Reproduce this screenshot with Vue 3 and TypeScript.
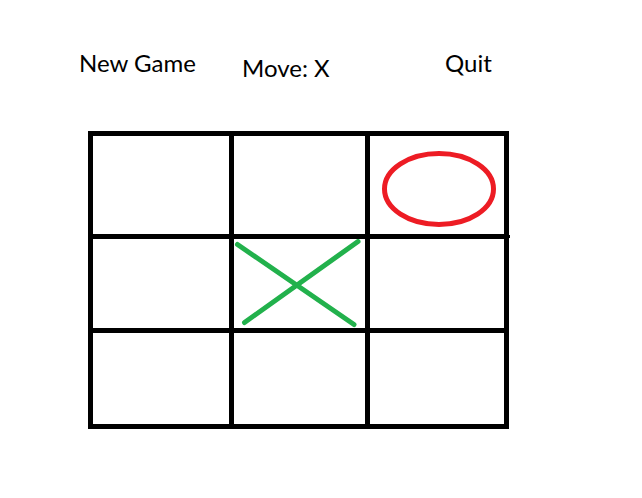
<script setup lang="ts">
import { ref } from 'vue'

type Player = 'X' | 'O'
type Mark = Player | null

const openingBoard = (): Mark[] => [null, null, 'O', null, 'X', null, null, null, null]

const cells = ref<Mark[]>(openingBoard())
const player = ref<Player>('X')
const active = ref(true)

function play(index: number): void {
  if (!active.value || cells.value[index]) return
  cells.value[index] = player.value
  player.value = player.value === 'X' ? 'O' : 'X'
}

function newGame(): void {
  cells.value = Array<Mark>(9).fill(null)
  player.value = 'X'
  active.value = true
}

function quit(): void {
  active.value = false
}
</script>

<template>
  <main class="game">
    <header class="toolbar">
      <button type="button" class="action" @click="newGame">New Game</button>
      <p class="status">Move: {{ player }}</p>
      <button type="button" class="action" @click="quit">Quit</button>
    </header>

    <section class="board">
      <button
        v-for="(mark, index) in cells"
        :key="index"
        type="button"
        class="cell"
        :aria-label="`Cell ${index + 1}: ${mark ?? 'empty'}`"
        @click="play(index)"
      >
        <svg v-if="mark === 'X'" class="mark cross" viewBox="0 0 131 89" aria-hidden="true">
          <path d="M3.5 5.5 120 85.5M124 2.5 10.5 83.5" />
        </svg>
        <svg v-else-if="mark === 'O'" class="mark nought" viewBox="0 0 134 98" aria-hidden="true">
          <ellipse cx="69" cy="53" rx="54.5" ry="35.5" />
        </svg>
      </button>
    </section>
  </main>
</template>

<style>
body {
  margin: 0;
  background: #fff;
}
</style>

<style scoped>
.game {
  padding: 47px 133px 48px 88px;
  color: #000;
  font-family: Lato, "Open Sans", sans-serif;
  font-size: 24px;
  line-height: 32px;
}

.toolbar {
  display: grid;
  grid-template-columns: 163fr 203fr 64fr;
  align-items: start;
  margin: 0 0 47px -9px;
}

.action {
  justify-self: start;
  padding: 0;
  border: 0;
  background: none;
  color: inherit;
  font: inherit;
  white-space: nowrap;
  cursor: pointer;
}

.status {
  margin: 0;
  padding-top: 5px;
  white-space: nowrap;
}

.board {
  position: relative;
  display: grid;
  grid-template-columns: 136fr 131fr 134fr;
  grid-template-rows: 98px 89px 91px;
  gap: 5px;
  padding: 5px;
  background: #000;
}

/* The upper rule runs slightly past the frame. */
.board::after {
  content: "";
  position: absolute;
  top: 104px;
  right: -1px;
  width: 1px;
  height: 3px;
  background: #000;
}

.cell {
  display: block;
  min-width: 0;
  padding: 0;
  border: 0;
  background: #fff;
  cursor: pointer;
}

.mark {
  display: block;
  width: 100%;
  height: 100%;
  fill: none;
  stroke-width: 5;
  stroke-linecap: round;
}

.cross {
  stroke: #22b14c;
}

.nought {
  stroke: #ed1c24;
}
</style>
